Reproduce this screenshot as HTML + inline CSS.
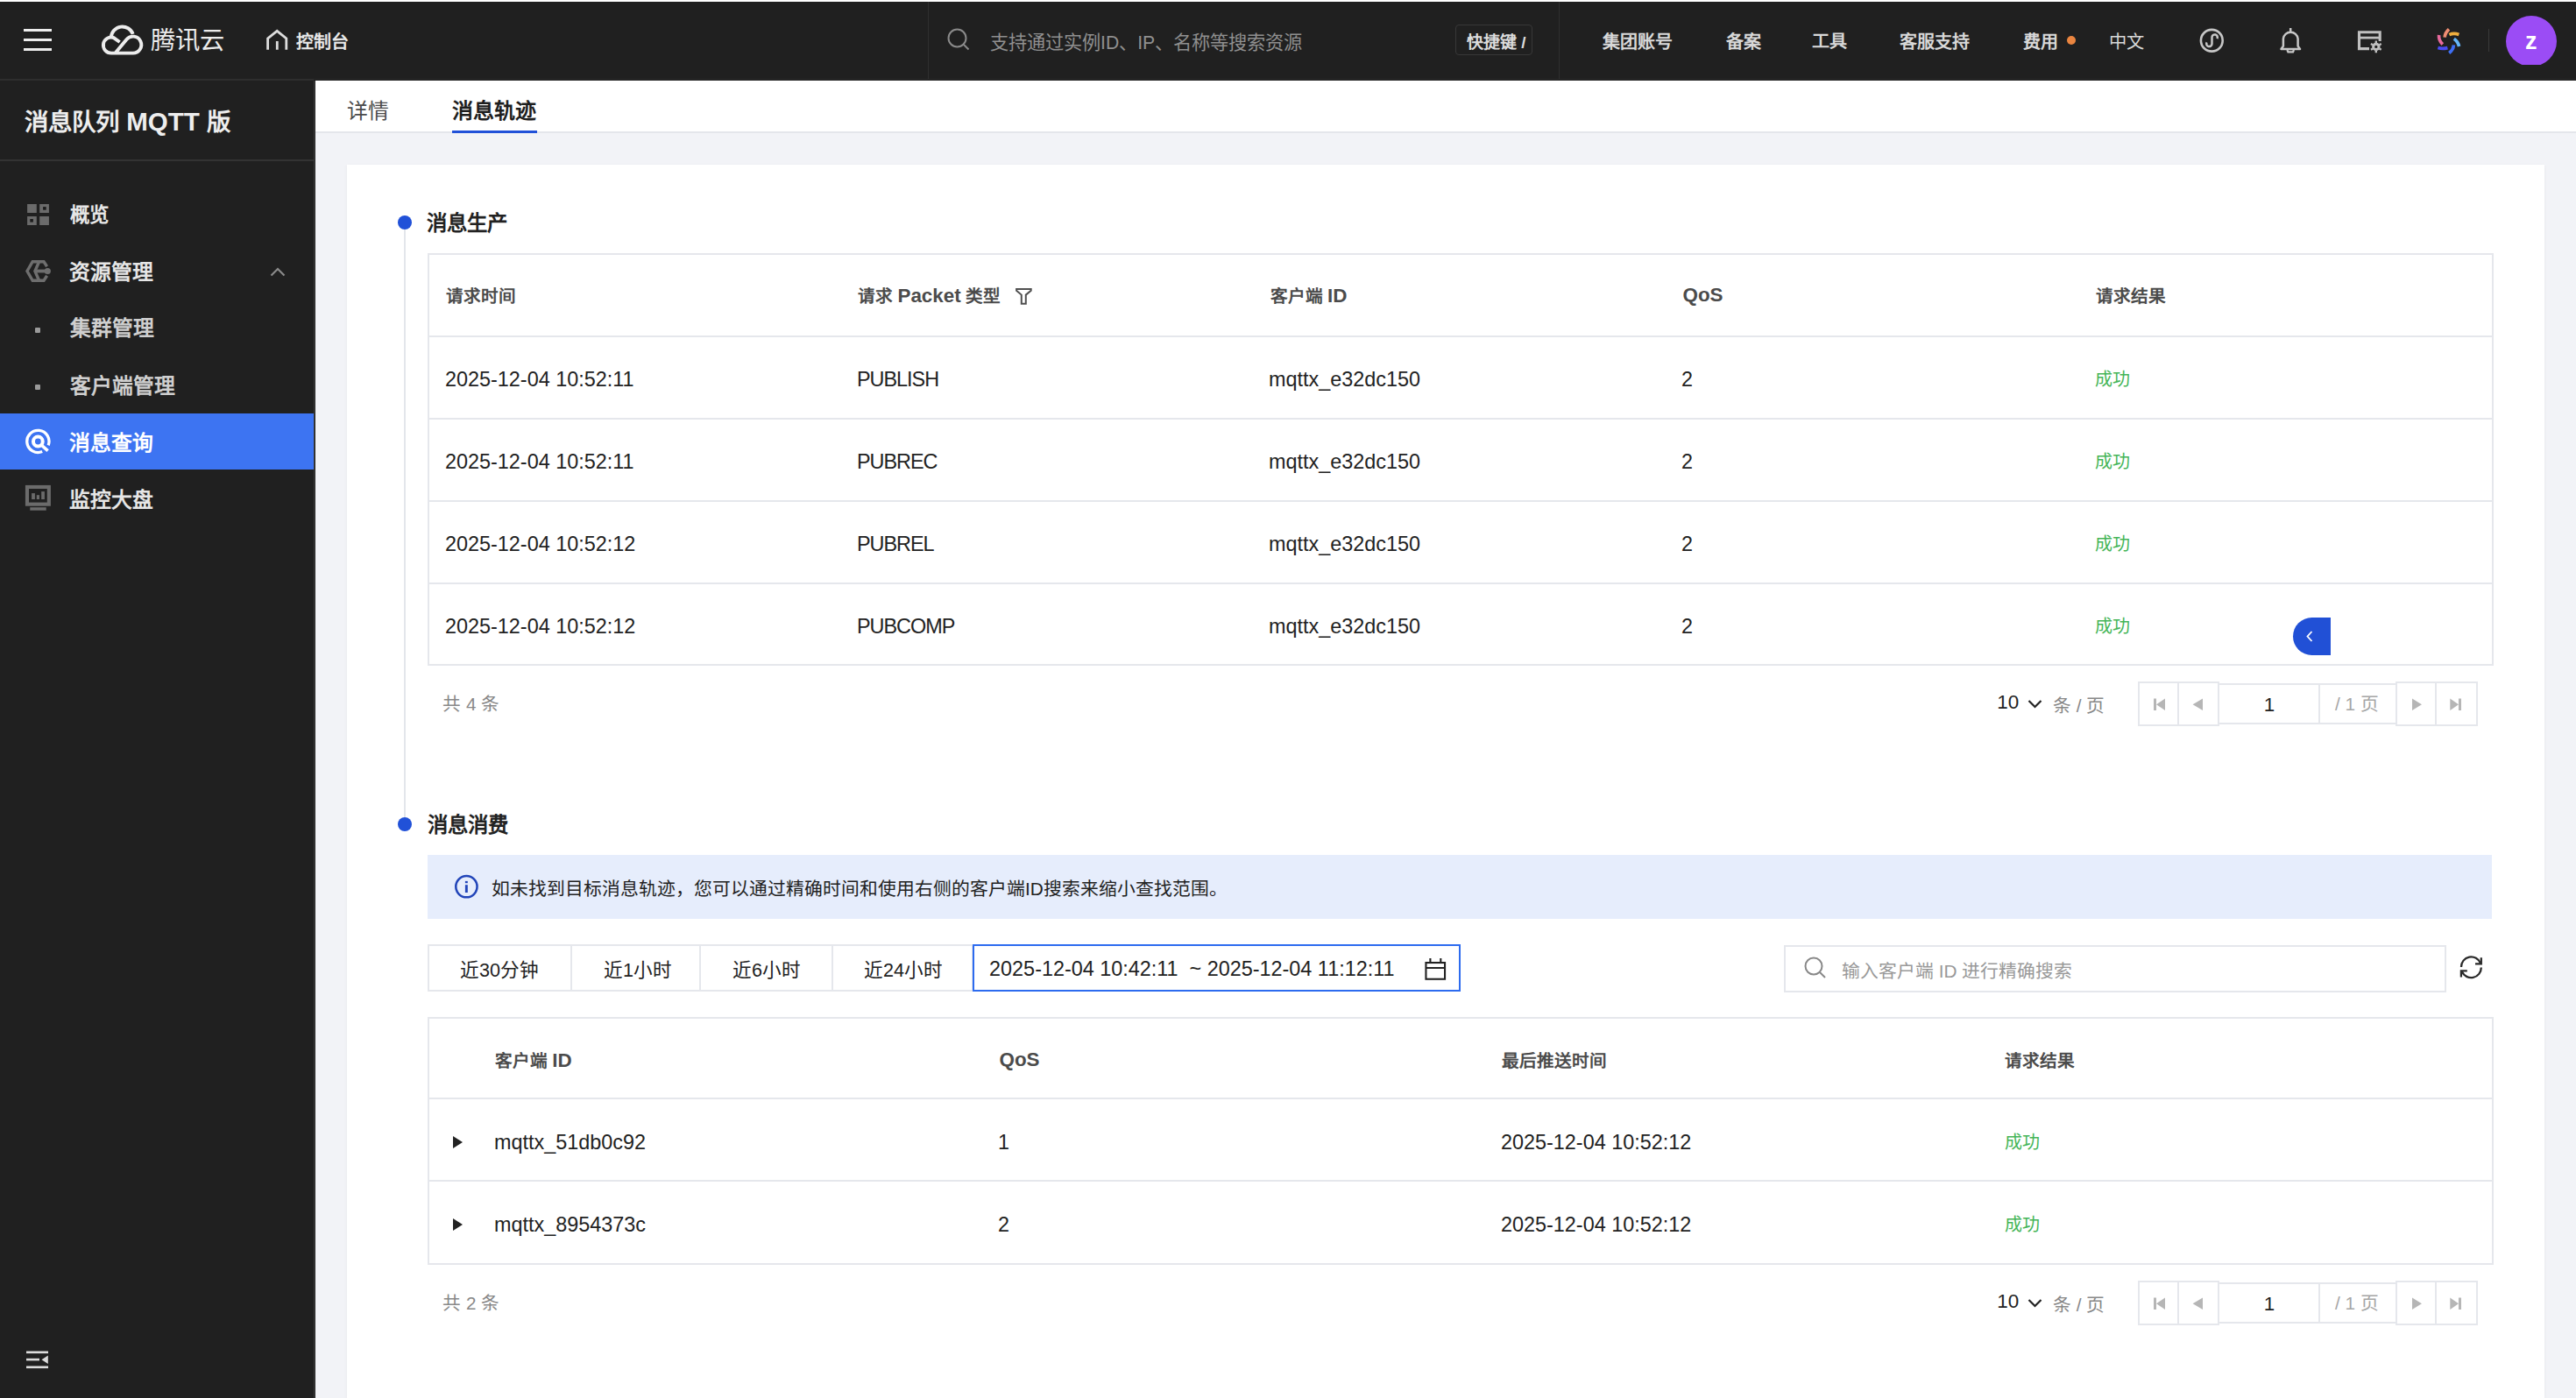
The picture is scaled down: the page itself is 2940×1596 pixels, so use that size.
<!DOCTYPE html>
<html lang="zh-CN"><head><meta charset="utf-8">
<style>
*{box-sizing:border-box;margin:0;padding:0}
html,body{width:2940px;height:1596px;overflow:hidden;background:#fff;font-family:"Liberation Sans",sans-serif}
.a{position:absolute}
.t{position:absolute;white-space:nowrap;line-height:1}
</style></head><body>
<div class="a" style="left:0px;top:0px;width:2940px;height:2px;background:#fff;"></div>
<div class="a" style="left:0px;top:2px;width:2940px;height:88px;background:#202020;"></div>
<div class="a" style="left:0px;top:90px;width:358px;height:2px;background:#2e2e2e;"></div>
<div class="a" style="left:358px;top:90px;width:2582px;height:1px;background:#2a2a2a;"></div>
<div class="a" style="left:358px;top:91px;width:2582px;height:1px;background:#1a1a1a;"></div>
<div class="a" style="left:27px;top:33px;width:32px;height:3px;background:#eee;"></div>
<div class="a" style="left:27px;top:44px;width:32px;height:3px;background:#eee;"></div>
<div class="a" style="left:27px;top:55px;width:32px;height:3px;background:#eee;"></div>
<svg class="a" style="left:100px;top:20px" width="80" height="50" viewBox="100 20 80 50">
<g fill="none" stroke="#ececec" stroke-width="3.9">
<path d="M126.8 42.6 A12.85 12.85 0 0 1 151.7 38.9"/>
<path d="M136.6 48 L129.7 43.05 A9 9 0 1 0 126.9 60.6 H151.8 A9.5 9.5 0 1 0 144.5 45 L131.6 60.6"/>
</g></svg>
<div class="t" id="logo" style="left:172.00px;top:32.00px;font-size:28.3px;color:#ececec;">腾讯云</div>
<svg class="a" style="left:302px;top:31px" width="29" height="28" viewBox="0 0 29 28">
<path d="M3.6 25.75 V13 L14.2 4.4 L24.8 13 V25.75" fill="none" stroke="#dcdcdc" stroke-width="2.8"/>
<path d="M14.3 16 V25.75" stroke="#dcdcdc" stroke-width="2.8"/></svg>
<div class="t" id="console" style="left:338.00px;top:38.00px;font-size:20px;color:#e8e8e8;font-weight:bold;">控制台</div>
<div class="a" style="left:1059px;top:2px;width:1px;height:88px;background:#2f2f2f;"></div>
<div class="a" style="left:1779px;top:2px;width:1px;height:88px;background:#2f2f2f;"></div>
<svg class="a" style="left:1080px;top:31px" width="28" height="28" viewBox="0 0 28 28">
<circle cx="12.5" cy="12.5" r="10" fill="none" stroke="#8a8a8a" stroke-width="2"/>
<path d="M19.5 19.5 L25.5 25.5" stroke="#8a8a8a" stroke-width="2"/></svg>
<div class="t" id="hsearch" style="left:1130.00px;top:38.00px;font-size:21.2px;color:#8f8f8f;">支持通过实例ID、IP、名称等搜索资源</div>
<div class="a" style="left:1661px;top:28px;width:88px;height:35px;border:1px solid #383838;border-radius:4px"></div>
<div class="t" id="shortcut" style="left:1674.00px;top:39.00px;font-size:19px;color:#dcdcdc;font-weight:bold;">快捷键 /</div>
<div class="t" id="n1" style="left:1829.00px;top:38.00px;font-size:20px;color:#d8d8d8;font-weight:bold;">集团账号</div>
<div class="t" id="n2" style="left:1970.00px;top:38.00px;font-size:20px;color:#d8d8d8;font-weight:bold;">备案</div>
<div class="t" id="n3" style="left:2068.00px;top:37.00px;font-size:20px;color:#d8d8d8;font-weight:bold;">工具</div>
<div class="t" id="n4" style="left:2168.00px;top:38.00px;font-size:20px;color:#d8d8d8;font-weight:bold;">客服支持</div>
<div class="t" id="n5" style="left:2309.00px;top:38.00px;font-size:20px;color:#d8d8d8;font-weight:bold;">费用</div>
<div class="a" style="left:2359px;top:41px;width:10px;height:10px;background:#ea8540;border-radius:50%"></div>
<div class="t" id="lang" style="left:2407.00px;top:38.00px;font-size:20.3px;color:#d8d8d8;">中文</div>
<svg class="a" style="left:2500px;top:25px" width="50" height="45" viewBox="2500 25 50 45">
<circle cx="2524.3" cy="46.25" r="12.4" fill="none" stroke="#c6c6c6" stroke-width="2.6"/>
<path d="M2518.6 48.4 A3.15 3.15 0 1 0 2524.5 50 V42.5 A3.15 3.15 0 1 1 2530.4 44.1" fill="none" stroke="#c6c6c6" stroke-width="2.5"/></svg>
<svg class="a" style="left:2595px;top:25px" width="40" height="45" viewBox="2595 25 40 45">
<path d="M2603.5 56 H2625 L2622.6 52.6 V44.2 A8.4 8.4 0 0 0 2605.9 44.2 V52.6 Z" fill="none" stroke="#c6c6c6" stroke-width="2.5" stroke-linejoin="round"/>
<path d="M2614.2 32 V36.5" stroke="#c6c6c6" stroke-width="2.5"/>
<path d="M2610.4 57 L2611.4 59.3 H2617 L2618 57" fill="none" stroke="#c6c6c6" stroke-width="2.3"/></svg>
<svg class="a" style="left:2680px;top:25px" width="50" height="45" viewBox="2680 25 50 45">
<path d="M2704 55.6 H2692.5 V36.7 H2716.2 V47" fill="none" stroke="#c0c0c0" stroke-width="3.1"/>
<path d="M2692.5 43.1 H2716.2" stroke="#c0c0c0" stroke-width="2.8"/>
<circle cx="2711.8" cy="53.4" r="3.2" fill="none" stroke="#c0c0c0" stroke-width="3"/>
<g stroke="#c0c0c0" stroke-width="2.4">
<path d="M2711.8 46.6 V49 M2711.8 57.8 V60.2 M2705.9 50 L2708 51.2 M2715.6 55.6 L2717.7 56.8 M2705.9 56.8 L2708 55.6 M2715.6 51.2 L2717.7 50"/>
</g></svg>
<svg class="a" style="left:2770px;top:20px" width="50" height="50" viewBox="2770 20 50 50">
<g fill="none" stroke-width="3.7" stroke-linecap="butt">
<path d="M2783.6 40 Q2783 46 2787.8 50.6" stroke="#e8699c"/>
<path d="M2790.2 42.6 Q2790.6 37 2795 33.3" stroke="#f08d72"/>
<path d="M2795.4 39.6 Q2800.5 37.2 2806.4 39.4" stroke="#eeae3e"/>
<path d="M2800.8 44.2 Q2805.2 47.2 2806.6 53" stroke="#64b6f8"/>
<path d="M2800.4 51.4 Q2800 57 2795.2 60.4" stroke="#3e6ef3"/>
<path d="M2793.4 54.6 Q2787.6 56.2 2782.4 54.6" stroke="#4b4cf3"/>
</g></svg>
<div class="a" style="left:2840px;top:33px;width:1px;height:26px;background:#3a3a3a;"></div>
<div class="a" style="left:2859px;top:17px;width:60px;height:57px;overflow:hidden"><div class="a" style="left:1px;top:1px;width:58px;height:58px;border-radius:50%;background:#9b4cf5"></div></div>
<div class="t" id="avatar" style="left:2882.00px;top:34.00px;font-size:27px;color:#fff;font-weight:bold;">z</div>
<div class="a" style="left:0px;top:92px;width:358px;height:1504px;background:#202020;"></div>
<div class="a" style="left:358px;top:92px;width:1px;height:1504px;background:#3a3a3a;"></div>
<div class="a" style="left:359px;top:92px;width:1px;height:1504px;background:#262626;"></div>
<div class="t" id="stitle" style="left:28.00px;top:124.00px;font-size:27.5px;color:#eeeeee;font-weight:bold;">消息队列<span style="font-size:29.5px"> MQTT </span>版</div>
<div class="a" style="left:0px;top:182px;width:358px;height:2px;background:#333;"></div>
<svg class="a" style="left:20px;top:220px" width="50" height="50" viewBox="0 0 50 50">
<rect x="11.1" y="13" width="10.7" height="10" fill="#6b6b6b"/>
<rect x="25.2" y="13" width="10.7" height="10" fill="#6b6b6b"/><rect x="29.1" y="16.1" width="3.6" height="3.6" fill="#1c1c1c"/>
<rect x="11.1" y="27" width="10.7" height="10" fill="#6b6b6b"/><rect x="14.3" y="30" width="3.6" height="3.6" fill="#1c1c1c"/>
<rect x="25.2" y="27" width="10.7" height="10" fill="#6b6b6b"/></svg>
<svg class="a" style="left:20px;top:285px" width="50" height="50" viewBox="0 0 50 50">
<path d="M33.6 19.2 L30 13.7 H17.2 L11 24.5 L17.2 35.3 H30 L33.6 29.8" fill="none" stroke="#6e6e6e" stroke-width="3.4" stroke-linejoin="miter"/>
<path d="M24.6 13.7 L19.9 24.5 L24.6 35.3" fill="none" stroke="#6e6e6e" stroke-width="3.4"/>
<path d="M20 24.5 H33" stroke="#6e6e6e" stroke-width="3.8"/>
<circle cx="34.3" cy="24.5" r="3.6" fill="#6e6e6e"/></svg>
<svg class="a" style="left:306px;top:302px" width="22" height="16" viewBox="0 0 22 16">
<path d="M3.5 12.5 L11 5 L18.5 12.5" fill="none" stroke="#8a8a8a" stroke-width="2.2"/></svg>
<div class="t" id="m1" style="left:80.00px;top:235.00px;font-size:22.4px;color:#e6e6e6;font-weight:bold;">概览</div>
<div class="t" id="m2" style="left:79.00px;top:299.00px;font-size:23.8px;color:#e6e6e6;font-weight:bold;">资源管理</div>
<div class="a" style="left:40px;top:374px;width:5.5px;height:5.5px;background:#9a9a9a;border-radius:1px"></div>
<div class="t" id="m3" style="left:80.00px;top:363.00px;font-size:23.8px;color:#cfcfcf;font-weight:bold;">集群管理</div>
<div class="a" style="left:40px;top:439px;width:5.5px;height:5.5px;background:#9a9a9a;border-radius:1px"></div>
<div class="t" id="m4" style="left:80.00px;top:429.00px;font-size:23.8px;color:#cfcfcf;font-weight:bold;">客户端管理</div>
<div class="a" style="left:0px;top:472px;width:358px;height:64px;background:#3d74f2;"></div>
<svg class="a" style="left:20px;top:480px" width="50" height="50" viewBox="0 0 50 50">
<path d="M28.2 35.55 A12.6 12.6 0 1 1 35.16 28.4" fill="none" stroke="#fff" stroke-width="3.3"/>
<circle cx="23.35" cy="24" r="5.4" fill="none" stroke="#fff" stroke-width="4"/>
<path d="M27.6 28.4 L34.6 34.6" stroke="#fff" stroke-width="3.6"/></svg>
<div class="t" id="m5" style="left:79.00px;top:494.00px;font-size:23.8px;color:#ffffff;font-weight:bold;">消息查询</div>
<svg class="a" style="left:20px;top:545px" width="50" height="50" viewBox="0 0 50 50">
<rect x="10.95" y="10.95" width="24.9" height="19.7" fill="none" stroke="#6b6b6b" stroke-width="4.1"/>
<rect x="16.1" y="18.1" width="3.8" height="6.9" fill="#6b6b6b"/><rect x="21.8" y="20.2" width="3.2" height="4.8" fill="#6b6b6b"/><rect x="27.2" y="16.1" width="3.7" height="8.9" fill="#6b6b6b"/>
<rect x="14.3" y="34.2" width="18.4" height="3.5" fill="#6b6b6b"/></svg>
<div class="t" id="m6" style="left:79.00px;top:559.00px;font-size:23.8px;color:#e6e6e6;font-weight:bold;">监控大盘</div>
<svg class="a" style="left:29px;top:1541px" width="28" height="23" viewBox="0 0 28 23">
<rect x="1" y="1.5" width="25" height="2.6" fill="#dcdcdc"/>
<rect x="1" y="9.8" width="15" height="2.6" fill="#dcdcdc"/>
<path d="M25.8 6.5 V16 L18.5 11.2 Z" fill="#dcdcdc"/>
<rect x="1" y="18.5" width="25" height="2.6" fill="#dcdcdc"/></svg>
<div class="a" style="left:360px;top:92px;width:2580px;height:1504px;background:#f2f3f7;"></div>
<div class="a" style="left:360px;top:92px;width:2580px;height:58px;background:#fff;"></div>
<div class="a" style="left:360px;top:150px;width:2580px;height:2px;background:#e4e6eb;"></div>
<div class="t" id="tab1" style="left:395.80px;top:115.40px;font-size:23.8px;color:#4a4a4a;">详情</div>
<div class="t" id="tab2" style="left:516.00px;top:115.40px;font-size:24px;color:#1e1e1e;font-weight:bold;">消息轨迹</div>
<div class="a" style="left:516px;top:149px;width:97px;height:3px;background:#2151d8;"></div>
<div class="a" style="left:396px;top:188px;width:2508px;height:1408px;background:#fff;box-shadow:0 1px 4px rgba(0,0,0,0.05)"></div>
<div class="a" style="left:461px;top:262px;width:2px;height:671px;background:#e3e6eb;"></div>
<div class="a" style="left:454px;top:246px;width:16px;height:16px;background:#2151d8;border-radius:50%"></div>
<div class="t" id="sec1" style="left:487.00px;top:244.10px;font-size:23.4px;color:#222;font-weight:bold;">消息生产</div>
<div class="a" style="left:488px;top:289px;width:2358px;height:471px;border:2px solid #e5e7ec"></div>
<div class="a" style="left:490px;top:383px;width:2354px;height:2px;background:#e5e7ec;"></div>
<div class="a" style="left:490px;top:477px;width:2354px;height:2px;background:#e5e7ec;"></div>
<div class="a" style="left:490px;top:571px;width:2354px;height:2px;background:#e5e7ec;"></div>
<div class="a" style="left:490px;top:665px;width:2354px;height:2px;background:#e5e7ec;"></div>
<div class="t" id="th1" style="left:509.10px;top:329.00px;font-size:19.6px;color:#4b4b4b;font-weight:bold;">请求时间</div>
<div class="t" id="th2" style="left:979.00px;top:327.00px;font-size:19.6px;color:#4b4b4b;font-weight:bold;">请求 <span style="font-size:22.4px">Packet</span> 类型</div>
<svg class="a" style="left:1150px;top:320px" width="40" height="35" viewBox="0 0 40 35"><path d="M10.1 9.9 H26.7 V11.8 L20.8 16.6 V26.7 H15.8 V16.6 L10.1 11.8 Z" fill="none" stroke="#505050" stroke-width="2"/></svg>
<div class="t" id="th3" style="left:1449.50px;top:327.00px;font-size:19.6px;color:#4b4b4b;font-weight:bold;">客户端 <span style="font-size:22.4px">ID</span></div>
<div class="t" id="th4" style="left:1920.50px;top:326.00px;font-size:22.4px;color:#4b4b4b;font-weight:bold;">QoS</div>
<div class="t" id="th5" style="left:2392.10px;top:329.00px;font-size:19.6px;color:#4b4b4b;font-weight:bold;">请求结果</div>
<div class="t" id="td_m" style="left:508.00px;top:422.00px;font-size:23.4px;color:#222;">2025-12-04 10:52:11</div>
<div class="t" style="left:978.00px;top:422.00px;font-size:23.4px;color:#222;letter-spacing:-1px;">PUBLISH</div>
<div class="t" style="left:1448.00px;top:422.00px;font-size:23.4px;color:#222;">mqttx_e32dc150</div>
<div class="t" style="left:1919.00px;top:422.00px;font-size:23.4px;color:#222;">2</div>
<div class="t" style="left:2391.00px;top:422.60px;font-size:20px;color:#45b557">成功</div>
<div class="t" style="left:508.00px;top:516.00px;font-size:23.4px;color:#222;">2025-12-04 10:52:11</div>
<div class="t" style="left:978.00px;top:516.00px;font-size:23.4px;color:#222;letter-spacing:-1px;">PUBREC</div>
<div class="t" style="left:1448.00px;top:516.00px;font-size:23.4px;color:#222;">mqttx_e32dc150</div>
<div class="t" style="left:1919.00px;top:516.00px;font-size:23.4px;color:#222;">2</div>
<div class="t" style="left:2391.00px;top:516.60px;font-size:20px;color:#45b557">成功</div>
<div class="t" style="left:508.00px;top:610.00px;font-size:23.4px;color:#222;">2025-12-04 10:52:12</div>
<div class="t" style="left:978.00px;top:610.00px;font-size:23.4px;color:#222;letter-spacing:-1px;">PUBREL</div>
<div class="t" style="left:1448.00px;top:610.00px;font-size:23.4px;color:#222;">mqttx_e32dc150</div>
<div class="t" style="left:1919.00px;top:610.00px;font-size:23.4px;color:#222;">2</div>
<div class="t" style="left:2391.00px;top:610.60px;font-size:20px;color:#45b557">成功</div>
<div class="t" style="left:508.00px;top:704.00px;font-size:23.4px;color:#222;">2025-12-04 10:52:12</div>
<div class="t" style="left:978.00px;top:704.00px;font-size:23.4px;color:#222;letter-spacing:-1px;">PUBCOMP</div>
<div class="t" style="left:1448.00px;top:704.00px;font-size:23.4px;color:#222;">mqttx_e32dc150</div>
<div class="t" style="left:1919.00px;top:704.00px;font-size:23.4px;color:#222;">2</div>
<div class="t" id="ok_m" style="left:2391.00px;top:704.60px;font-size:20px;color:#45b557">成功</div>
<div class="a" style="left:2617px;top:705px;width:43px;height:43px;background:#2150d6;border-radius:21.5px 0 0 21.5px"></div>
<svg class="a" style="left:2629px;top:718px" width="14" height="17" viewBox="0 0 14 17"><path d="M9.5 3 L4.5 8.5 L9.5 14" fill="none" stroke="#fff" stroke-width="1.8"/></svg>
<div class="t" id="p1tot" style="left:505.20px;top:794.40px;font-size:20.6px;color:#888;">共 4 条</div>
<div class="t" id="p1ps" style="left:2279.20px;top:790.90px;font-size:22.4px;color:#222;">10</div>
<svg class="a" style="left:2313px;top:797px" width="19" height="14" viewBox="0 0 19 14"><path d="M2.5 3 L9.5 10 L16.5 3" fill="none" stroke="#222" stroke-width="2.2"/></svg>
<div class="t" id="p1pp" style="left:2343.00px;top:796.00px;font-size:20.7px;color:#888;">条 / 页</div>
<div class="a" style="left:2440px;top:778px;width:93px;height:51px;border:2px solid #e5e7ec"></div>
<div class="a" style="left:2485px;top:778px;width:2px;height:51px;background:#e5e7ec"></div>
<div class="a" style="left:2533px;top:780px;width:201px;height:47px;border-top:2px solid #e5e7ec;border-bottom:2px solid #e5e7ec"></div>
<div class="a" style="left:2646px;top:780px;width:2px;height:47px;background:#e5e7ec"></div>
<div class="a" style="left:2734px;top:778px;width:94px;height:51px;border:2px solid #e5e7ec"></div>
<div class="a" style="left:2779px;top:778px;width:2px;height:51px;background:#e5e7ec"></div>
<svg class="a" style="left:2456px;top:796px" width="18" height="16" viewBox="0 0 18 16"><rect x="2" y="1.5" width="3" height="13.5" fill="#b6b6b6"/><path d="M15 1.5 V15 L5 8.25 Z" fill="#b6b6b6"/></svg>
<svg class="a" style="left:2500px;top:796px" width="18" height="16" viewBox="0 0 18 16"><path d="M14 1.5 V15 L2.6 8.25 Z" fill="#b6b6b6"/></svg>
<svg class="a" style="left:2751px;top:796px" width="18" height="16" viewBox="0 0 18 16"><path d="M2 1.5 V15 L13 8.25 Z" fill="#b6b6b6"/></svg>
<svg class="a" style="left:2794px;top:796px" width="18" height="16" viewBox="0 0 18 16"><path d="M2.3 1.5 V15 L12 8.25 Z" fill="#b6b6b6"/><rect x="12" y="1.5" width="3" height="13.5" fill="#b6b6b6"/></svg>
<div class="t" id="p1one" style="left:2583.70px;top:793.60px;font-size:22.4px;color:#222;">1</div>
<div class="t" id="p1of" style="left:2665.00px;top:794.00px;font-size:20.8px;color:#a6a6a6;">/ 1 页</div>
<div class="a" style="left:454px;top:933px;width:16px;height:16px;background:#2151d8;border-radius:50%"></div>
<div class="t" id="sec2" style="left:487.50px;top:931.00px;font-size:23.4px;color:#222;font-weight:bold;">消息消费</div>
<div class="a" style="left:488px;top:976px;width:2356px;height:73px;background:#e6edfc;"></div>
<svg class="a" style="left:505px;top:990px" width="55" height="50" viewBox="0 0 55 50"><circle cx="27.4" cy="22.2" r="12.15" fill="none" stroke="#2245b9" stroke-width="2.5"/><rect x="25.9" y="15.9" width="2.9" height="2.3" fill="#2245b9"/><rect x="25.9" y="20.2" width="2.9" height="8.8" fill="#2245b9"/></svg>
<div class="t" id="alert" style="left:560.90px;top:1005.40px;font-size:20.8px;color:#222;">如未找到目标消息轨迹，您可以通过精确时间和使用右侧的客户端ID搜索来缩小查找范围。</div>
<div class="a" style="left:488px;top:1078px;width:623px;height:54px;border:2px solid #e5e7ec"></div>
<div class="a" style="left:651px;top:1078px;width:2px;height:54px;background:#e5e7ec;"></div>
<div class="a" style="left:798px;top:1078px;width:2px;height:54px;background:#e5e7ec;"></div>
<div class="a" style="left:949px;top:1078px;width:2px;height:54px;background:#e5e7ec;"></div>
<div class="t" id="tb1" style="left:525.00px;top:1097.00px;font-size:21.6px;color:#222;">近30分钟</div>
<div class="t" id="tb2" style="left:689.00px;top:1097.00px;font-size:21.6px;color:#222;">近1小时</div>
<div class="t" id="tb3" style="left:836.00px;top:1097.00px;font-size:21.6px;color:#222;">近6小时</div>
<div class="t" id="tb4" style="left:986.00px;top:1097.00px;font-size:21.6px;color:#222;">近24小时</div>
<div class="a" style="left:1110px;top:1078px;width:557px;height:54px;border:2px solid #2d6bef"></div>
<div class="t" id="range" style="left:1129.10px;top:1094.80px;font-size:23.4px;color:#222;">2025-12-04 10:42:11 &nbsp;~ 2025-12-04 11:12:11</div>
<svg class="a" style="left:1615px;top:1085px" width="50" height="45" viewBox="0 0 50 45"><g fill="none" stroke="#222" stroke-width="2.1">
<rect x="12.45" y="14.05" width="21.6" height="18.7"/><path d="M12.5 20 H34 M17.4 9 V13.5 M29.3 9 V13.5"/></g></svg>
<div class="a" style="left:2036px;top:1079px;width:756px;height:54px;border:2px solid #e5e7ec"></div>
<svg class="a" style="left:2058px;top:1091px" width="28" height="28" viewBox="0 0 28 28"><circle cx="12" cy="12" r="9.5" fill="none" stroke="#888" stroke-width="2"/><path d="M19 19 L25 25" stroke="#888" stroke-width="2"/></svg>
<div class="t" id="sph" style="left:2102.00px;top:1098.80px;font-size:20.8px;color:#999;">输入客户端 ID 进行精确搜索</div>
<svg class="a" style="left:2795px;top:1080px" width="50" height="50" viewBox="0 0 50 50"><g fill="none" stroke="#2a2a2a" stroke-width="2.3">
<path d="M14 24 A11.4 11.4 0 0 1 36 19.6"/><path d="M30 20.4 H36.8 V13.2"/>
<path d="M36.8 24.6 A11.4 11.4 0 0 1 14.9 29.2"/><path d="M20.8 28.3 H13.9 V35.4"/></g></svg>
<div class="a" style="left:488px;top:1161px;width:2358px;height:283px;border:2px solid #e5e7ec"></div>
<div class="a" style="left:490px;top:1253px;width:2354px;height:2px;background:#e5e7ec;"></div>
<div class="a" style="left:490px;top:1347px;width:2354px;height:2px;background:#e5e7ec;"></div>
<div class="t" id="t2h1" style="left:564.90px;top:1200.00px;font-size:19.6px;color:#4b4b4b;font-weight:bold;">客户端 <span style="font-size:22.4px">ID</span></div>
<div class="t" id="t2h2" style="left:1140.50px;top:1199.00px;font-size:22.4px;color:#4b4b4b;font-weight:bold;">QoS</div>
<div class="t" id="t2h3" style="left:1714.00px;top:1202.00px;font-size:19.6px;color:#4b4b4b;font-weight:bold;">最后推送时间</div>
<div class="t" id="t2h4" style="left:2288.00px;top:1202.00px;font-size:19.6px;color:#4b4b4b;font-weight:bold;">请求结果</div>
<svg class="a" style="left:516px;top:1296px" width="13" height="16" viewBox="0 0 13 16"><path d="M1 1 L12 8 L1 15 Z" fill="#222"/></svg>
<div class="t" style="left:564.00px;top:1293.00px;font-size:23.4px;color:#222">mqttx_51db0c92</div>
<div class="t" style="left:1139.00px;top:1293.00px;font-size:23.4px;color:#222">1</div>
<div class="t" style="left:1713.00px;top:1293.00px;font-size:23.4px;color:#222">2025-12-04 10:52:12</div>
<div class="t" style="left:2288.00px;top:1293.60px;font-size:20px;color:#45b557">成功</div>
<svg class="a" style="left:516px;top:1390px" width="13" height="16" viewBox="0 0 13 16"><path d="M1 1 L12 8 L1 15 Z" fill="#222"/></svg>
<div class="t" style="left:564.00px;top:1387.00px;font-size:23.4px;color:#222">mqttx_8954373c</div>
<div class="t" style="left:1139.00px;top:1387.00px;font-size:23.4px;color:#222">2</div>
<div class="t" style="left:1713.00px;top:1387.00px;font-size:23.4px;color:#222">2025-12-04 10:52:12</div>
<div class="t" style="left:2288.00px;top:1387.60px;font-size:20px;color:#45b557">成功</div>
<div class="t" id="p2tot" style="left:505.20px;top:1478.40px;font-size:20.6px;color:#888;">共 2 条</div>
<div class="t" id="p2ps" style="left:2279.20px;top:1474.90px;font-size:22.4px;color:#222;">10</div>
<svg class="a" style="left:2313px;top:1481px" width="19" height="14" viewBox="0 0 19 14"><path d="M2.5 3 L9.5 10 L16.5 3" fill="none" stroke="#222" stroke-width="2.2"/></svg>
<div class="t" id="p2pp" style="left:2343.00px;top:1480.00px;font-size:20.7px;color:#888;">条 / 页</div>
<div class="a" style="left:2440px;top:1462px;width:93px;height:51px;border:2px solid #e5e7ec"></div>
<div class="a" style="left:2485px;top:1462px;width:2px;height:51px;background:#e5e7ec"></div>
<div class="a" style="left:2533px;top:1464px;width:201px;height:47px;border-top:2px solid #e5e7ec;border-bottom:2px solid #e5e7ec"></div>
<div class="a" style="left:2646px;top:1464px;width:2px;height:47px;background:#e5e7ec"></div>
<div class="a" style="left:2734px;top:1462px;width:94px;height:51px;border:2px solid #e5e7ec"></div>
<div class="a" style="left:2779px;top:1462px;width:2px;height:51px;background:#e5e7ec"></div>
<svg class="a" style="left:2456px;top:1480px" width="18" height="16" viewBox="0 0 18 16"><rect x="2" y="1.5" width="3" height="13.5" fill="#b6b6b6"/><path d="M15 1.5 V15 L5 8.25 Z" fill="#b6b6b6"/></svg>
<svg class="a" style="left:2500px;top:1480px" width="18" height="16" viewBox="0 0 18 16"><path d="M14 1.5 V15 L2.6 8.25 Z" fill="#b6b6b6"/></svg>
<svg class="a" style="left:2751px;top:1480px" width="18" height="16" viewBox="0 0 18 16"><path d="M2 1.5 V15 L13 8.25 Z" fill="#b6b6b6"/></svg>
<svg class="a" style="left:2794px;top:1480px" width="18" height="16" viewBox="0 0 18 16"><path d="M2.3 1.5 V15 L12 8.25 Z" fill="#b6b6b6"/><rect x="12" y="1.5" width="3" height="13.5" fill="#b6b6b6"/></svg>
<div class="t" id="p2one" style="left:2583.70px;top:1477.60px;font-size:22.4px;color:#222;">1</div>
<div class="t" id="p2of" style="left:2665.00px;top:1478.00px;font-size:20.8px;color:#a6a6a6;">/ 1 页</div>
</body></html>
